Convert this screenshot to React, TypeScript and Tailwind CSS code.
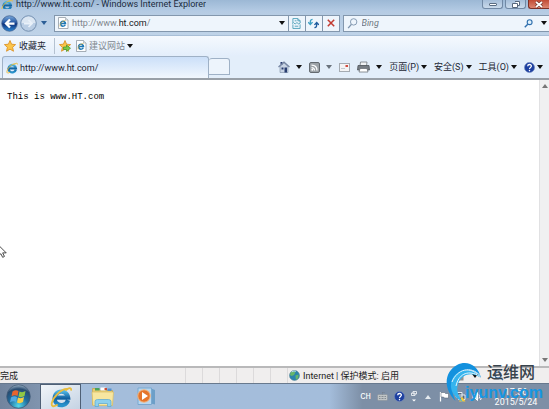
import { useState } from 'react'
import type { ReactNode } from 'react'

const UI_FONT = "font-['Roboto','Noto_Sans_CJK_SC',sans-serif]"

function Caret({ className = 'text-[#111]' }: { className?: string }) {
  return (
    <svg viewBox="0 0 6 4" className={`h-1 w-1.5 shrink-0 ${className}`} aria-hidden="true">
      <path d="M0 0h6L3 4z" fill="currentColor" />
    </svg>
  )
}

function IeLogo({ className }: { className: string }) {
  return (
    <svg viewBox="0 0 24 24" className={className} aria-hidden="true">
      <defs>
        <linearGradient id="ie-blue" x1="0" y1="0" x2="0" y2="1">
          <stop offset="0" stopColor="#4db4e2" />
          <stop offset="0.5" stopColor="#12609f" />
          <stop offset="1" stopColor="#2893cd" />
        </linearGradient>
      </defs>
      <path
        d="M19.6 15.4A7.4 7.4 0 1 1 19.8 12.6H7"
        fill="none"
        stroke="url(#ie-blue)"
        strokeWidth="4.6"
      />
      <path
        d="M17.5 4.5C20.6 1.9 23.2 1.5 23 4.2M18.2 3.2C12.5 3.4 3.6 11.6 2 18.5c-.8 3.9 1.5 4.6 5.6 2.3"
        fill="none"
        stroke="#e9bd3f"
        strokeWidth="2"
        strokeLinecap="round"
      />
    </svg>
  )
}

// Page sheet with the browser mark on it
function PageIcon() {
  return (
    <svg viewBox="0 0 24 24" className="h-3 w-3 shrink-0" aria-hidden="true">
      <path d="M3 1h14l5 5v17H3z" fill="#fff" stroke="#8b949e" strokeWidth="1.5" />
      <path d="M17 1v5h5" fill="#dfe5ea" stroke="#8b949e" />
      <path d="M16.5 15.5A5 5 0 1 1 17 13H8" fill="none" stroke="#1d77b5" strokeWidth="3" />
      <path d="M17 7c-5 0-12 6-11 12" fill="none" stroke="#e0ae33" strokeWidth="1.4" />
    </svg>
  )
}

function Star({ add = false }: { add?: boolean }) {
  return (
    <svg viewBox="0 0 24 24" className="h-3 w-3 shrink-0" aria-hidden="true">
      <path
        d="m12 1 3.2 7.4 8 .8-6 5.4 1.8 7.9-7-4.2-7 4.2 1.8-7.9-6-5.4 8-.8z"
        fill="#fbc54a"
        stroke="#d98a1c"
        strokeWidth="1.6"
      />
      {add && (
        <path
          d="M9 14h6v-4l8 6.5-8 6.5v-4H9z"
          fill="#7ccb48"
          stroke="#3d8e27"
          strokeWidth="1.3"
        />
      )}
    </svg>
  )
}

function HelpIcon({ className }: { className: string }) {
  return (
    <svg viewBox="0 0 24 24" className={className} aria-hidden="true">
      <circle cx="12" cy="12" r="11" fill="#1c3fa0" stroke="#7186bd" strokeWidth="1.4" />
      <path
        d="M8 9.2C8.2 4 16.6 4.3 16 9.3c-.3 2.7-4 2.7-4 6.2"
        fill="none"
        stroke="#fff"
        strokeWidth="2.8"
      />
      <circle cx="12" cy="18.8" r="1.7" fill="#fff" />
    </svg>
  )
}

function TitleBar() {
  return (
    <header className="flex h-[11px] shrink-0 justify-between bg-linear-to-b from-[#9cb8d5] to-[#b4cbe4]">
      <div className="flex h-[9px] items-center gap-[3px] overflow-hidden pl-px">
        <IeLogo className="h-3 w-3 shrink-0" />
        <h1 className="text-[9px] leading-[9px] whitespace-nowrap text-[#1b2b3d]">
          http://www.ht.com/ - Windows Internet Explorer
        </h1>
      </div>
      <div className="flex h-[9px] gap-0.5">
        <button
          type="button"
          aria-label="Minimize"
          className="flex w-[21px] items-center justify-center rounded-b-[3px] border border-t-0 border-[#7189a5] bg-linear-to-b from-[#a5bed9] to-[#c9daeb]"
        >
          <span className="h-[3px] w-2 rounded-[1px] border border-[#5a6c82] bg-white" />
        </button>
        <button
          type="button"
          aria-label="Restore"
          className="flex w-[21px] items-center justify-center rounded-b-[3px] border border-t-0 border-[#7189a5] bg-linear-to-b from-[#a5bed9] to-[#c9daeb]"
        >
          <svg viewBox="0 0 8 7" className="h-[7px] w-2" aria-hidden="true">
            <path d="M3 .5h4.5v4H6M.5 2.5h5v4h-5z" fill="#fff" stroke="#56677c" />
          </svg>
        </button>
        <button
          type="button"
          aria-label="Close"
          className="flex w-[21px] items-center justify-center rounded-bl-[3px] border-b border-l border-[#7c3027] bg-linear-to-b from-[#c14a35] to-[#dc8570]"
        >
          <svg viewBox="0 0 8 7" className="h-[7px] w-2" aria-hidden="true">
            <path d="m1 1 6 5M7 1 1 6" stroke="#6b3029" strokeWidth="3" />
            <path d="m1 1 6 5M7 1 1 6" stroke="#fff" strokeWidth="1.7" />
          </svg>
        </button>
      </div>
    </header>
  )
}

function NavBar() {
  const [query, setQuery] = useState('')

  return (
    <nav className="flex h-6 shrink-0 items-center bg-linear-to-b from-[#b5cbe3] to-[#bfd3e8]">
      <div className="flex w-[54px] shrink-0 items-center pl-px">
        <button type="button" aria-label="Back">
          <svg viewBox="0 0 34 34" className="size-[17px]" aria-hidden="true">
            <defs>
              <linearGradient id="back-fill" x1="0" y1="0" x2="0" y2="1">
                <stop offset="0" stopColor="#7aa9dc" />
                <stop offset="0.48" stopColor="#1d4f9d" />
                <stop offset="0.52" stopColor="#0d2f78" />
                <stop offset="1" stopColor="#2f8bd8" />
              </linearGradient>
            </defs>
            <circle cx="17" cy="17" r="15.5" fill="url(#back-fill)" stroke="#415f8c" strokeWidth="1.5" />
            <path d="M27 17H10m8-8-8 8 8 8" fill="none" stroke="#fff" strokeWidth="4.5" />
          </svg>
        </button>
        <button type="button" aria-label="Forward" className="ml-0.5">
          <svg viewBox="0 0 34 34" className="size-[17px]" aria-hidden="true">
            <circle cx="17" cy="17" r="15.5" fill="#b9cde4" stroke="#7590b0" strokeWidth="2" />
            <path d="M3 16a14 13 0 0 1 28 0z" fill="#dbe6f2" />
            <path d="M8 17h16m-7-7 7 7-7 7" fill="none" stroke="#e9f1f9" strokeWidth="3.5" />
          </svg>
        </button>
        <button type="button" aria-label="Recent pages" className="ml-1">
          <Caret className="text-[#2c5e96]" />
        </button>
      </div>

      <div className="flex h-[17px] min-w-0 flex-[287] items-stretch border border-[#8397ad] bg-[#eef5fc]">
        <label htmlFor="address" className="flex items-center pr-[3px] pl-0.5">
          <PageIcon />
        </label>
        <div className="relative flex min-w-0 flex-1 items-center">
          <input
            id="address"
            aria-label="Address"
            defaultValue="http://www.ht.com/"
            className="h-full w-full bg-transparent text-[9px] leading-3 text-transparent outline-none"
          />
          <span
            aria-hidden="true"
            className="pointer-events-none absolute left-0 text-[9px] leading-3 text-[#7f868d]"
          >
            http://www.<span className="text-[#16191d]">ht.com</span>/
          </span>
        </div>
        <button type="button" aria-label="Show addresses" className="flex w-3 items-center justify-center">
          <Caret />
        </button>
        <button
          type="button"
          aria-label="Compatibility view"
          className="flex w-[17px] items-center justify-center border-l border-[#8397ad]"
        >
          <svg viewBox="0 0 20 24" className="h-[11px] w-[9px]" fill="none" stroke="#4d9fb8" strokeWidth="2" aria-hidden="true">
            <path d="M2 10V1h11l5 5v4M2 14v9h16v-9M13 1v5h5M0 12l3-2 4 3 4-3 4 3 4-3M6 18h8M6 6h4" />
          </svg>
        </button>
        <button
          type="button"
          aria-label="Refresh"
          className="flex w-[17px] items-center justify-center border-l border-[#8397ad]"
        >
          <svg viewBox="0 0 24 24" className="size-[11px]" fill="none" strokeWidth="3" aria-hidden="true">
            <path d="M10 3C5 3 5 6 5 13M0 9l5 5 5-5" stroke="#3ea0c4" />
            <path d="M14 21c5 0 5-3 5-10m-5 4 5-5 5 5" stroke="#1f5c9f" />
          </svg>
        </button>
        <button
          type="button"
          aria-label="Stop"
          className="flex w-[17px] items-center justify-center border-l border-[#8397ad]"
        >
          <svg viewBox="0 0 10 10" className="size-2" aria-hidden="true">
            <path d="m1 1 8 8M9 1 1 9" stroke="#c23a30" strokeWidth="1.9" />
          </svg>
        </button>
      </div>

      <div className="ml-[3px] flex h-[17px] min-w-0 flex-[205] items-center border border-r-0 border-[#8397ad] bg-[#eef5fc] pl-[3px]">
        <label htmlFor="search" className="shrink-0">
          <svg viewBox="0 0 24 24" className="size-[11px]" fill="none" aria-hidden="true">
            <circle cx="14.5" cy="8.5" r="7" stroke="#7d94ad" strokeWidth="2" />
            <path d="m9.5 14-7 8" stroke="#7d94ad" strokeWidth="3" />
          </svg>
        </label>
        <input
          id="search"
          aria-label="Search"
          value={query}
          onChange={(e) => setQuery(e.target.value)}
          placeholder="Bing"
          className="ml-1 h-full min-w-0 flex-1 bg-transparent text-[9px] leading-3 outline-none placeholder:text-[#6d7780] placeholder:italic"
        />
        <button type="button" aria-label="Go" className="mr-2">
          <svg viewBox="0 0 24 24" className="size-[9px]" fill="none" aria-hidden="true">
            <circle cx="15" cy="8.5" r="6.5" fill="#dff0fb" stroke="#2f6fae" strokeWidth="3" />
            <path d="m10 14-8 8" stroke="#2f6fae" strokeWidth="4" />
          </svg>
        </button>
        <button type="button" aria-label="Search options" className="mr-0.5">
          <Caret />
        </button>
      </div>
    </nav>
  )
}

function FavoritesBar() {
  return (
    <div className="flex h-[21px] shrink-0 items-center border-t border-[#a9bfd7] bg-linear-to-b from-[#f5f9fe] to-[#e3eefb] pl-1 text-[9px] leading-3">
      <button type="button" className="flex items-center gap-[3px] text-[#1d2733]">
        <Star />
        收藏夹
      </button>
      <span className="mr-1 ml-2 h-4 w-px bg-[#b5c2d1]" />
      <button type="button" aria-label="Add to favorites" className="mr-1">
        <Star add />
      </button>
      <button type="button" className="flex items-center gap-0.5 text-[#808890]">
        <PageIcon />
        <span>建议网站</span>
        <Caret />
      </button>
    </div>
  )
}

function Command({ label, children }: { label: string; children: ReactNode }) {
  return (
    <button type="button" aria-label={label} className="flex shrink-0 items-center gap-1.5">
      {children}
    </button>
  )
}

function TextCommand({ text }: { text: string }) {
  return (
    <button type="button" className="flex shrink-0 items-center gap-0.5 whitespace-nowrap">
      {text}
      <Caret />
    </button>
  )
}

function TabRow() {
  return (
    <div className="flex h-6 shrink-0 items-stretch border-b-2 border-[#99a0a8] bg-[#e3eefa] text-[9px] leading-3 text-[#1d2733]">
      <div className="ml-0.5 flex min-w-0 flex-[206] items-center gap-0.5 rounded-t-[3px] border border-b-0 border-[#9fb1c6] bg-linear-to-b from-[#cbdff8] to-[#f1f7fe] pl-[3px]">
        <IeLogo className="h-3 w-3 shrink-0" />
        <a href="#page">http://www.ht.com/</a>
      </div>
      <button
        type="button"
        aria-label="New tab"
        className="mt-0.5 mb-[3px] w-[21px] rounded-t-[3px] border border-l-0 border-[#9fb1c6] bg-[#edf4fc]"
      />
      <div className="flex flex-[320] items-center justify-end pr-1.5">
        <div className="flex items-center gap-[7px]">
          <Command label="Home">
            <svg viewBox="0 0 24 24" className="size-3" aria-hidden="true">
              <path d="M4 11v12h16V11l-8-7z" fill="#c9d4e4" stroke="#667992" />
              <path d="M5 2h4v5H5z" fill="#26376d" />
              <path d="M1 12 12 2l11 10" fill="none" stroke="#7585a2" strokeWidth="2.5" />
              <path d="M7 13h4v4H7zm6 0h5v10h-5z" fill="#293d70" />
            </svg>
            <Caret />
          </Command>
          <Command label="Feeds">
            <svg viewBox="0 0 22 22" className="size-[11px]" aria-hidden="true">
              <rect x="1" y="1" width="20" height="20" rx="3" fill="#9da3a8" stroke="#646a70" strokeWidth="2" />
              <path d="M5 6q11 0 11 11M5 11q6 0 6 6" fill="none" stroke="#fff" strokeWidth="2.5" />
              <circle cx="6.5" cy="15.5" r="1.8" fill="#fff" />
            </svg>
            <Caret className="text-[#69727c]" />
          </Command>
          <Command label="Read mail">
            <svg viewBox="0 0 22 18" className="h-[9px] w-[11px]" aria-hidden="true">
              <rect x="1" y="1" width="20" height="16" fill="#f4f4f5" stroke="#a5abb2" strokeWidth="2" />
              <rect x="13" y="4" width="5" height="4" fill="#d34b3f" />
              <path d="M4 11h8" stroke="#b4bbc3" strokeWidth="1.5" />
            </svg>
          </Command>
          <Command label="Print">
            <svg viewBox="0 0 26 24" className="h-3 w-[13px]" aria-hidden="true">
              <path d="M7 2h13l-1 8H6z" fill="#f0f2f4" stroke="#6b7177" strokeWidth="1.5" />
              <path d="M2 9h22l1 9H1z" fill="#777d84" stroke="#4b5056" strokeWidth="1.5" />
              <path d="M6 15h14l2 7H4z" fill="#fff" stroke="#686e74" strokeWidth="1.5" />
            </svg>
            <Caret />
          </Command>
          <TextCommand text="页面(P)" />
          <TextCommand text="安全(S)" />
          <TextCommand text="工具(O)" />
          <button type="button" aria-label="Help" className="flex items-center gap-0.5">
            <HelpIcon className="size-[11px]" />
            <Caret />
          </button>
        </div>
      </div>
    </div>
  )
}

function Scrollbar() {
  return (
    <div className="flex w-2.5 shrink-0 flex-col items-center justify-between border-l border-[#e1e1e3] bg-[#f0f0f1] py-1">
      <Caret className="rotate-180 text-[#777]" />
      <Caret className="text-[#777]" />
    </div>
  )
}

function StatusBar() {
  return (
    <footer className="flex h-[17px] shrink-0 items-center border-t-2 border-[#b9b9ba] bg-[#f0eeee] text-[9px] leading-3 text-[#222]">
      <span className="min-w-0 flex-1">完成</span>
      <div className="flex h-full">
        {[0, 1, 2, 3, 4, 5].map((n) => (
          <span key={n} className="w-[17px] border-l border-[#dcdadb]" />
        ))}
      </div>
      <div className="flex h-full w-[168px] items-center gap-[3px] border-l border-[#dcdadb] pl-px whitespace-nowrap">
        <svg viewBox="0 0 24 24" className="size-[11px]" aria-hidden="true">
          <circle cx="12" cy="12" r="11" fill="#2b84ad" stroke="#507e8c" />
          <path d="M4 5q7-4 10 0l-3 6-5 2-4-2zm10 7 7-2-1 8-5 3z" fill="#65b66a" />
          <path d="M6 4q5-3 9-1" stroke="#c4e8ef" strokeWidth="2" fill="none" />
        </svg>
        Internet | 保护模式: 启用
      </div>
      <div className="flex h-full w-[94px] items-center gap-2 pl-0.5">
        <svg viewBox="0 0 14 20" className="h-2.5 w-[7px]" aria-hidden="true">
          <path d="M3 9V5q4-6 8 0v4" fill="none" stroke="#777" strokeWidth="2" />
          <rect x="1" y="9" width="12" height="10" fill="#929292" />
        </svg>
        <Caret />
        <svg viewBox="0 0 20 20" className="ml-2 size-2.5" fill="none" stroke="#3f6f9e" strokeWidth="2.5" aria-hidden="true">
          <circle cx="8" cy="8" r="6" />
          <path d="m13 13 5 5" />
        </svg>
      </div>
    </footer>
  )
}

function Taskbar() {
  return (
    <div className="flex h-[26px] shrink-0 items-stretch border-t border-[#68798e] bg-linear-to-r from-[#a4bddb] from-60% to-[#7d8fa6] to-66%">
      <button
        type="button"
        aria-label="Start"
        className="flex w-10 items-center justify-center bg-linear-to-r from-[#71849e] to-[#8094ae] pr-1"
      >
        <svg viewBox="0 0 50 50" className="size-[25px]" aria-hidden="true">
          <defs>
            <radialGradient id="orb" cx="0.5" cy="0.9" r="0.9">
              <stop offset="0" stopColor="#54dbea" />
              <stop offset="0.45" stopColor="#206d9e" />
              <stop offset="0.8" stopColor="#294c70" />
              <stop offset="1" stopColor="#9db4c8" />
            </radialGradient>
          </defs>
          <circle cx="25" cy="25" r="23.5" fill="url(#orb)" stroke="#415a76" strokeWidth="1.5" />
          <path d="M13 15q6-4 12-1l-2 10q-6-3-12 1z" fill="#e8642d" />
          <path d="M27 15q6 3 12-1l-2 10q-6 4-12 1z" fill="#91c844" />
          <path d="M10 27q6-4 12-1l-2 10q-6-3-12 1z" fill="#50a9e2" />
          <path d="M24 27q6 3 12-1l-2 10q-6 4-12 1z" fill="#f8ce43" />
        </svg>
      </button>
      <button
        type="button"
        aria-label="Internet Explorer"
        className="flex w-[41px] items-center justify-center border border-b-0 border-[#4e5f75] bg-linear-to-br from-[#f1f5f9] to-[#c5d3e3]"
      >
        <IeLogo className="size-[22px]" />
      </button>
      <button type="button" aria-label="Explorer" className="flex w-11 items-center justify-center">
        <svg viewBox="0 0 48 44" className="h-[22px] w-6" aria-hidden="true">
          <path d="M3 5h12l3 4h25v29H3z" fill="#e9cc70" stroke="#c6a54b" strokeWidth="1.5" />
          <path d="M8 4h9v5H8z" fill="#4aa35b" />
          <path d="M19 3h10v6H19z" fill="#fff" />
          <path d="M27 4h5v4h-5z" fill="#ca4c39" />
          <path d="M33 5h8v5h-8z" fill="#5391ce" />
          <path d="M2 12h43l-2 27H4z" fill="#f7e6a0" stroke="#dabf69" strokeWidth="1.5" />
          <path d="M8 41V31q0-4 5-4h22q5 0 5 4v10h-7v-6H15v6z" fill="#8cd0ee" stroke="#5daad2" strokeWidth="1.5" />
        </svg>
      </button>
      <button type="button" aria-label="Media Player" className="flex w-[42px] items-center justify-center">
        <svg viewBox="0 0 40 38" className="h-[19px] w-5" aria-hidden="true">
          <path d="m30 3 8 3v29l-8-2z" fill="#6c9fc8" />
          <path d="M4 2h27v33H4z" fill="#b8d7ef" stroke="#79a8d0" strokeWidth="2" />
          <circle cx="16" cy="18" r="12.5" fill="#e5752c" stroke="#f4b884" strokeWidth="2" />
          <path d="m12 10 12 8-12 8z" fill="#fff" />
        </svg>
      </button>

      <div className="ml-auto flex items-center gap-1.5 pr-3 text-[9px] leading-[10px] text-white">
        <span className="font-['Liberation_Mono',monospace]">CH</span>
        <svg viewBox="0 0 22 18" className="h-[9px] w-[11px]" aria-hidden="true">
          <rect x="1" y="5" width="20" height="12" rx="2" fill="#bfc4c6" stroke="#858d95" />
          <path d="M4 9h14M4 13h14M11 5V1h5" stroke="#707980" strokeWidth="1.5" strokeDasharray="2 1" fill="none" />
        </svg>
        <HelpIcon className="size-[11px]" />
        <svg viewBox="0 0 12 24" className="h-3 w-1.5" aria-hidden="true">
          <path d="M4 1h7v5H4zM1 4h7v5H1z" fill="#74879e" stroke="#fff" strokeWidth="1.5" />
          <path d="M2 17h8l-4 4z" fill="#fff" />
        </svg>
        <Caret className="ml-0.5 rotate-180 text-[#e4eaf0]" />
        <svg viewBox="0 0 20 22" className="ml-0.5 h-[11px] w-2.5" aria-hidden="true">
          <path d="M3 2v19" stroke="#fff" strokeWidth="2.5" />
          <path d="M4 3h7l2 2h6v9h-8l-2-2H4z" fill="#fff" stroke="#4d5a69" />
        </svg>
        <svg viewBox="0 0 22 22" className="size-[11px]" aria-hidden="true">
          <path d="M2 3h12v9H2zM7 8h13v9H7z" fill="#53677c" stroke="#e7edf2" strokeWidth="2" />
          <path d="m14 11 7 10H8z" fill="#f2c73c" />
        </svg>
        <svg viewBox="0 0 22 22" className="size-[11px]" fill="none" stroke="#fff" strokeWidth="2" aria-hidden="true">
          <path d="M2 8h4l5-5v16l-5-5H2z" fill="#dce3ea" />
          <path d="M14 7q3 4 0 8M17 4q5 7 0 14" />
        </svg>
        <div className="ml-1.5 flex w-[42px] flex-col items-center">
          <time>17:56</time>
          <time>2015/5/24</time>
        </div>
      </div>
    </div>
  )
}

// Site badge floating over the lower right corner
function SiteBadge() {
  return (
    <div className="pointer-events-none absolute right-1.5 bottom-1.5 h-10 w-[98px]">
      <svg viewBox="0 0 80 84" className="absolute bottom-0 left-0 h-[42px] w-10" aria-hidden="true">
        <path d="M72 34C66 8 44-2 24 8-2 22-4 56 21 80 9 54 13 31 31 22c16-8 30-4 41 12z" fill="#1391de" />
        <path d="M70 33C54 21 36 26 28 41c-7 14-3 28 8 41C8 68 6 41 22 26c14-12 36-10 48 7z" fill="#35b4ee" />
        <path d="M70 29C52 9 24 16 14 42M65 28C44 18 27 27 22 50" fill="none" stroke="#e5f5fd" strokeWidth="2" />
      </svg>
      <div className="absolute right-0 bottom-0 flex flex-col items-end">
        <span className="mr-2 text-[16px] leading-5 font-medium text-[#38434d]">运维网</span>
        <span className="font-['Liberation_Sans',sans-serif] text-[16px] leading-5 font-bold text-[#1596e2]">
          iyunv.com
        </span>
      </div>
    </div>
  )
}

export default function App() {
  return (
    <div className={`relative flex h-screen flex-col overflow-hidden bg-white ${UI_FONT}`}>
      <TitleBar />
      <NavBar />
      <FavoritesBar />
      <TabRow />
      <div className="flex min-h-0 flex-1">
        <main id="page" className="min-w-0 flex-1 px-[7px] py-[11px]">
          <p className="font-['Liberation_Mono',monospace] text-[9px] leading-3 text-black">
            This is www.HT.com
          </p>
        </main>
        <Scrollbar />
      </div>
      <StatusBar />
      <Taskbar />
      <SiteBadge />
      <svg viewBox="0 0 9 14" className="pointer-events-none absolute top-3/5 left-0 h-3.5 w-2" aria-hidden="true">
        <path d="M-3-2 7 8H3l2 4-2 1-2-4-4 3z" fill="#fff" stroke="#333" />
      </svg>
    </div>
  )
}
